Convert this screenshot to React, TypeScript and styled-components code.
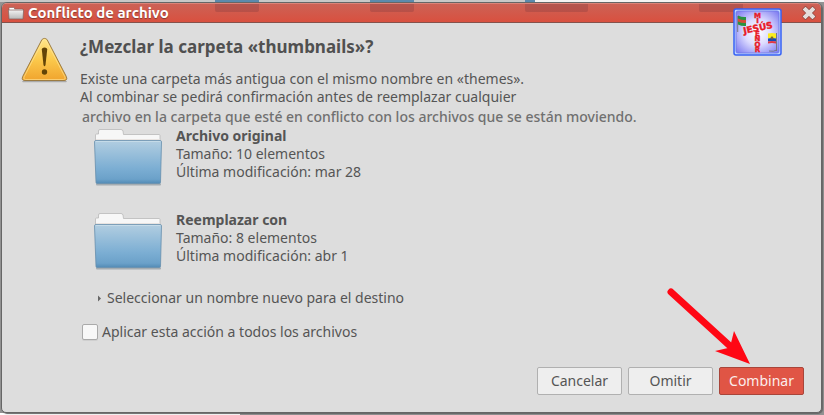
import React from "react";
import styled, { createGlobalStyle } from "styled-components";

const GlobalStyle = createGlobalStyle`
  * { box-sizing: border-box; }
  html, body, #root { height: 100%; }
  body {
    margin: 0;
    overflow: hidden;
    font-family: "Noto Sans", "Open Sans", sans-serif;
    font-size: 14px;
    line-height: 18px;
    color: #555;
  }
`;

const Desktop = styled.div`
  min-height: 100%;
  display: flex;
  padding: 2px 2px 2px 1px;
  background:
    linear-gradient(#fff, #fff) left bottom / 240px 2px no-repeat,
    linear-gradient(90deg, #c8c8c8 215px, #5a8aad 215px 259px, #c8c8c8 259px 370px, #5a8aad 370px 414px, #c8c8c8 414px 525px, #5a8aad 525px 535px, #f4f4f4 535px) top / 100% 2px no-repeat,
    #929292;
`;

const Window = styled.section`
  flex: 1;
  display: flex;
  flex-direction: column;
  border: 1px solid #666;
  border-radius: 6px 6px 5px 5px;
  background: #ddd;
  overflow: hidden;
  box-shadow: 1px 1px 1px #666;
`;

const TitleBar = styled.header`
  position: relative;
  flex: none;
  height: 20px;
  display: flex;
  align-items: center;
  gap: 4px;
  padding: 0 5px 0 6px;
  border-top: 1px solid #dc8378;
  border-bottom: 1px solid #85514b;
  background: linear-gradient(#cc6256, #d9503f);
`;

const Title = styled.h1`
  position: relative;
  margin: 0;
  flex: 1;
  font-family: Ubuntu, "Noto Sans", sans-serif;
  font-size: 15px;
  line-height: 18px;
  font-weight: 700;
  color: #fff;
  text-shadow: 0 1px 1px #82392f;
`;

const Shade = styled.span<{ $left: number; $width: number }>`
  position: absolute;
  top: 0;
  left: ${(p) => p.$left}px;
  width: ${(p) => p.$width}px;
  height: 8px;
  border-radius: 0 0 2px 2px;
  background: rgba(120, 55, 60, 0.28);
`;

const CloseButton = styled.button`
  display: flex;
  padding: 0;
  border: 0;
  background: none;
`;

const Badge = styled.svg`
  position: absolute;
  z-index: 1;
  top: 8px;
  right: 42px;
  width: 49px;
  height: 48px;
`;

const Body = styled.main`
  flex: 1;
  display: grid;
  grid-template-columns: 47px minmax(0, 1fr);
  column-gap: 12px;
  padding: 14px 17px 17px 19px;
`;

const Content = styled.div`
  display: flex;
  flex-direction: column;
`;

const Heading = styled.h2`
  margin: 0 0 13px;
  font-size: 17px;
  line-height: 20px;
  font-weight: 700;
  color: #505050;
`;

const Message = styled.p`
  margin: 0;
`;

const LastLine = styled.span`
  display: block;
  padding: 2px 0 0 2px;
  color: #707070;
  font-weight: 500;
`;

const FileList = styled.div`
  display: grid;
  row-gap: 24px;
  padding: 1px 0 0 12px;
`;

const FileRow = styled.article`
  display: grid;
  grid-template-columns: 72px minmax(0, 1fr);
  column-gap: 12px;
`;

const FileName = styled.h3`
  margin: 0;
  font-size: 14px;
  line-height: 18px;
  font-weight: 700;
`;

const Detail = styled.p`
  margin: 0;
`;

const Expander = styled.button`
  align-self: flex-start;
  display: flex;
  align-items: center;
  gap: 5px;
  margin-top: 18px;
  padding: 0 0 0 18px;
  border: 0;
  background: none;
  color: inherit;
  font: inherit;
`;

const CheckLabel = styled.label`
  align-self: flex-start;
  display: flex;
  align-items: center;
  gap: 4px;
  margin-top: 16px;
  padding-left: 2px;
`;

const Check = styled.input`
  appearance: none;
  width: 16px;
  height: 16px;
  margin: 0;
  border: 1px solid #aaa;
  border-radius: 2px;
  background: #f8f8f8;
  box-shadow: 0 1px 0 #cfcfcf;
`;

const Actions = styled.footer`
  display: flex;
  justify-content: flex-end;
  gap: 6px;
  margin-top: auto;
`;

const ActionButton = styled.button<{ $primary?: boolean }>`
  width: 85px;
  height: 28px;
  padding: 0;
  border: 1px solid ${(p) => (p.$primary ? "#a8453a" : "#b0b0b0")};
  border-radius: 2px;
  background: ${(p) => (p.$primary ? "#e05545" : "#eee")};
  color: ${(p) => (p.$primary ? "#fbeeec" : "#555")};
  font: inherit;
`;

const Pointer = styled.svg`
  position: absolute;
  z-index: 2;
  right: 73px;
  bottom: 50px;
  width: 84px;
  height: 77px;
  pointer-events: none;
`;

const SmallFolder = () => (
  <svg width="16" height="14" viewBox="0 0 16 14" aria-hidden="true">
    <defs>
      <linearGradient id="small" x1="0" y1="0" x2="0" y2="1">
        <stop stopColor="#f2f2f2" />
        <stop offset="1" stopColor="#b9b9b9" />
      </linearGradient>
    </defs>
    <path d="M1 3V1.5h5.5V3H15v2H1z" fill="#fff" stroke="#8c5751" strokeWidth=".6" />
    <path d="M.4 4h15.2L15 13H1z" fill="url(#small)" stroke="#82605d" strokeWidth=".7" />
  </svg>
);

const CloseIcon = () => (
  <svg width="14" height="14" viewBox="0 0 14 14" aria-hidden="true">
    <path d="M3.500 3.500l7 7M10.500 3.500l-7 7" stroke="#8e4a42" strokeWidth="5.4" strokeLinecap="square" />
    <path d="M3.500 3.500l7 7M10.500 3.500l-7 7" stroke="#e5dedb" strokeWidth="4" strokeLinecap="square" />
  </svg>
);

const Warning = () => (
  <svg width="47" height="46" viewBox="0 0 47 46" role="img" aria-label="Advertencia">
    <defs>
      <linearGradient id="warn" x1="0" y1="0" x2="0" y2="1">
        <stop stopColor="#ffe68a" />
        <stop offset=".5" stopColor="#fbc94c" />
        <stop offset="1" stopColor="#f0a42e" />
      </linearGradient>
    </defs>
    <path d="M2 44.500h43" stroke="#aaa" strokeWidth="1.500" strokeLinecap="round" />
    <path d="M20.700 3C22 .9 25 .9 26.300 3L45.300 39.500Q47 43.500 43 43.500H4Q0 43.500 1.700 39.500Z" fill="url(#warn)" stroke="#9b7b42" />
    <path d="M21.700 4Q23.500 1.500 25.300 4L44 40Q45 42.500 42.500 42.500H4.500Q2 42.500 3 40Z" fill="none" stroke="#ffe7a0" strokeOpacity=".6" />
    <path d="M20.800 12.500Q20.800 10.500 23.500 10.500T26.200 12.500L24.500 28Q23.500 30.500 22.500 28Z" fill="#624407" />
    <circle cx="23.500" cy="35" r="2.700" fill="#624407" />
  </svg>
);

const Folder = () => (
  <svg width="72" height="60" viewBox="-2 -1 72 60" aria-hidden="true">
    <defs>
      <linearGradient id="folder" x1="0" y1="0" x2="0" y2="1">
        <stop stopColor="#b2cee1" />
        <stop offset=".65" stopColor="#7caed3" />
        <stop offset=".9" stopColor="#6ba1c9" />
        <stop offset="1" stopColor="#528ab5" />
      </linearGradient>
    </defs>
    <path d="M3 56.500h63" stroke="#8d989f" strokeWidth="2" strokeLinecap="round" opacity=".7" />
    <path d="M1.500 15V7Q1.500 6 2.500 6H4.500V3Q4.500 1.500 6 1.500H27Q28.500 1.500 29 3L29.500 6.500H65Q66 6.500 66 7.500V15Z" fill="#f7f7f7" stroke="#b9b9b9" strokeWidth=".8" />
    <path d="M2 11.500h63.500" stroke="#e8e3e0" />
    <path d="M.5 14Q.5 12.500 2 12.500H66Q67.500 12.500 67.500 14L66.500 54.500Q66.500 55.500 65.500 55.500H3Q2 55.500 2 54.500Z" fill="url(#folder)" stroke="#668eac" strokeWidth=".8" />
    <path d="M1.500 13.500h65" stroke="#c5dbe8" />
  </svg>
);

const Logo = () => (
  <Badge viewBox="0 0 49 48" role="img" aria-label="Jesús Misenor">
    <defs>
      <radialGradient id="glow" r=".68">
        <stop stopColor="#fff" />
        <stop offset=".45" stopColor="#dddcff" />
        <stop offset="1" stopColor="#7d7af0" />
      </radialGradient>
    </defs>
    <rect x="1" y="1" width="47" height="46" rx="2" fill="#bcd2ff" stroke="#3762f5" strokeWidth="1.500" />
    <rect x="3" y="3" width="43" height="42" rx="2" fill="url(#glow)" stroke="#6977e8" strokeWidth=".8" />
    <path d="M4.700 8v16" stroke="#777b86" />
    <path d="M5 7.500q4 2 8 1.500v9q-4 .5-8-1.500z" fill="#299340" />
    <path d="M5 10.500q4 2 8 1.500v3q-4 .5-8-1.500z" fill="#d64b38" />
    <path d="M43.500 25v18M36 43q5 1 7.500-1" fill="none" stroke="#737889" />
    <path d="M35 25.500q4-1 8 0v5q-4-1-8 0z" fill="#fbec20" />
    <path d="M35 30.500q4-1 8 0v3q-4-1-8 0z" fill="#164bb4" />
    <path d="M35 33.500q4-1 8 0v2q-4-1-8 0z" fill="#e33742" />
    <circle cx="39" cy="30" r="1.400" fill="#746837" />
    <g fill="#e81b28" stroke="#e81b28" strokeWidth=".4" fontFamily="DejaVu Sans, sans-serif" fontWeight="700" fontSize="7" textAnchor="middle">
      <text>
        <tspan x="24.500" y="9.500">M</tspan>
        <tspan x="24.500" y="15">I</tspan>
        <tspan x="24.500" y="27.500">E</tspan>
        <tspan x="24.500" y="33">N</tspan>
        <tspan x="24.500" y="38.500">O</tspan>
        <tspan x="24.500" y="44">R</tspan>
      </text>
      <text x="25" y="23" fontSize="9" transform="rotate(-12 25 20)">JESÚS</text>
    </g>
  </Badge>
);

const files = [
  { name: "Archivo original", size: "Tamaño: 10 elementos", date: "Última modificación: mar 28" },
  { name: "Reemplazar con", size: "Tamaño: 8 elementos", date: "Última modificación: abr 1" },
];

const shades = [
  { left: 213, width: 44 },
  { left: 368, width: 44 },
  { left: 523, width: 63 },
  { left: 697, width: 44 },
];

export default function App() {
  return (
    <>
      <GlobalStyle />
      <Desktop>
        <Window role="dialog" aria-labelledby="dialog-title">
          <TitleBar>
            {shades.map((s) => <Shade key={s.left} $left={s.left} $width={s.width} />)}
            <SmallFolder />
            <Title id="dialog-title">Conflicto de archivo</Title>
            <CloseButton aria-label="Cerrar"><CloseIcon /></CloseButton>
          </TitleBar>
          <Body>
            <Warning />
            <Content>
              <Heading>¿Mezclar la carpeta «thumbnails»?</Heading>
              <Message>
                Existe una carpeta más antigua con el mismo nombre en «themes».<br />
                Al combinar se pedirá confirmación antes de reemplazar cualquier
                <LastLine>archivo en la carpeta que esté en conflicto con los archivos que se están moviendo.</LastLine>
              </Message>
              <FileList>
                {files.map((file) => (
                  <FileRow key={file.name}>
                    <Folder />
                    <div>
                      <FileName>{file.name}</FileName>
                      <Detail>{file.size}</Detail>
                      <Detail>{file.date}</Detail>
                    </div>
                  </FileRow>
                ))}
              </FileList>
              <Expander aria-expanded={false}>
                <svg width="4" height="7" viewBox="0 0 4 7" aria-hidden="true"><path d="M0 .5l3 3-3 3z" fill="#666" /></svg>
                Seleccionar un nombre nuevo para el destino
              </Expander>
              <CheckLabel>
                <Check type="checkbox" />
                Aplicar esta acción a todos los archivos
              </CheckLabel>
              <Actions>
                <ActionButton>Cancelar</ActionButton>
                <ActionButton>Omitir</ActionButton>
                <ActionButton $primary>Combinar</ActionButton>
              </Actions>
            </Content>
          </Body>
        </Window>
        <Logo />
        <Pointer viewBox="0 0 84 77" aria-hidden="true">
          <path d="M4 4L63 58" stroke="#ff0714" strokeWidth="7" strokeLinecap="round" />
          <path d="M83 76L67 43L64 55L61 60L48 63Z" fill="#ff0714" />
        </Pointer>
      </Desktop>
    </>
  );
}
